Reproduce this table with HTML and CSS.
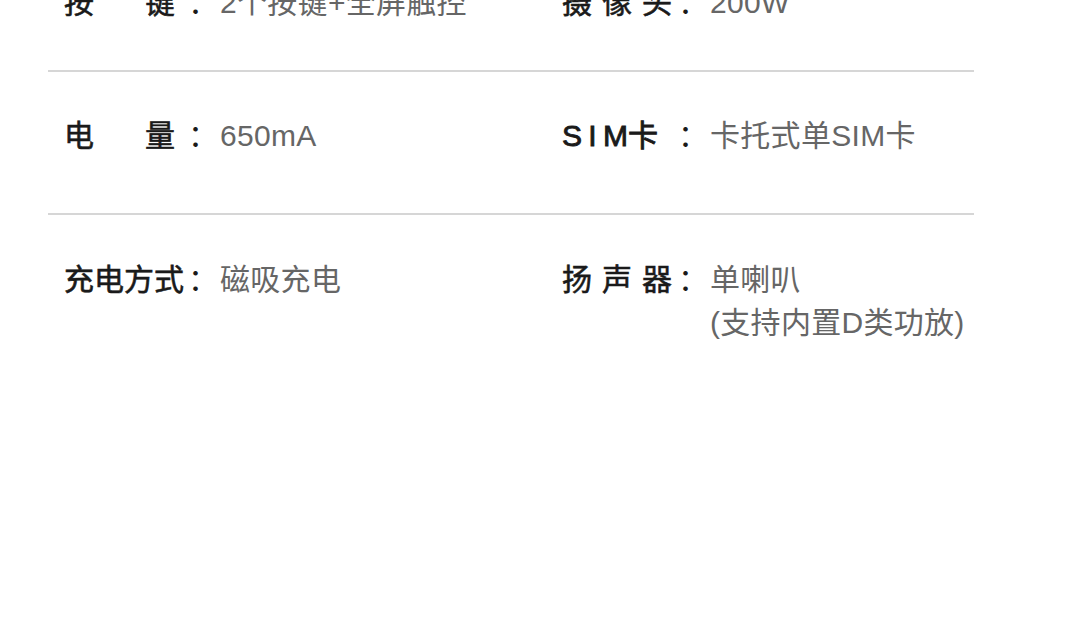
FILE: index.html
```html
<!DOCTYPE html>
<html lang="zh-CN">
<head>
    <meta charset="UTF-8">
    <meta name="viewport" content="width=device-width, initial-scale=1.0">
    <title>规格参数</title>
    <link rel="stylesheet" href="styles.css">
</head>
<body>
    <div class="specs">
        <div class="spec-row first">
            <div class="spec left">
                <span class="label"><span class="name spread"><i>按</i><i>键</i></span><span class="colon">：</span></span>
                <span class="value">2个按键+全屏触控</span>
            </div>
            <div class="spec right">
                <span class="label"><span class="name spread"><i>摄</i><i>像</i><i>头</i></span><span class="colon">：</span></span>
                <span class="value">200W</span>
            </div>
        </div>

        <div class="spec-row">
            <div class="spec left">
                <span class="label"><span class="name spread"><i>电</i><i>量</i></span><span class="colon">：</span></span>
                <span class="value">650mA</span>
            </div>
            <div class="spec right">
                <span class="label"><span class="name sim">S I M卡</span><span class="colon">：</span></span>
                <span class="value">卡托式单SIM卡</span>
            </div>
        </div>

        <div class="spec-row last">
            <div class="spec left">
                <span class="label"><span class="name">充电方式</span><span class="colon">：</span></span>
                <span class="value">磁吸充电</span>
            </div>
            <div class="spec right">
                <span class="label"><span class="name spread"><i>扬</i><i>声</i><i>器</i></span><span class="colon">：</span></span>
                <span class="value">单喇叭<br>(支持内置D类功放)</span>
            </div>
        </div>
    </div>
</body>
</html>
```

FILE: styles.css
```css
body {
    margin: 0;
    background-color: #fff;
    font-family: "Liberation Sans", "Noto Sans CJK SC", sans-serif;
    font-size: 30px;
    line-height: 43px;
}

.specs {
    width: 926px;
    margin: -64px 0 0 48px;
}

.spec-row {
    display: grid;
    grid-template-columns: 498px 1fr;
    padding: 42px 0 56px 16px;
    border-bottom: 2px solid #d6d6d6;
}

.spec-row.first {
    padding-top: 45px;
    padding-bottom: 46px;
}

.spec-row.last {
    padding-top: 43px;
    border-bottom: none;
}

.spec {
    display: grid;
    align-items: start;
}

.spec.left {
    grid-template-columns: 156px 1fr;
}

.spec.right {
    grid-template-columns: 148px 1fr;
}

.label {
    display: flex;
    color: #1a1a1a;
    white-space: nowrap;
}

.name {
    display: inline-block;
    -webkit-text-stroke: 0.6px #1a1a1a;
}

.name i {
    font-style: normal;
}

.left .name {
    width: 124px;
}

.right .name {
    width: 116px;
}

.left .name.spread {
    display: flex;
    justify-content: space-between;
    padding-right: 13px;
    width: 111px;
}

.right .name.spread {
    display: flex;
    justify-content: space-between;
    width: 110px;
    padding-right: 6px;
}

.name.sim {
    word-spacing: -2px;
    -webkit-text-stroke: 0.9px #1a1a1a;
}

.value {
    color: #666;
    letter-spacing: 0.3px;
}
```
